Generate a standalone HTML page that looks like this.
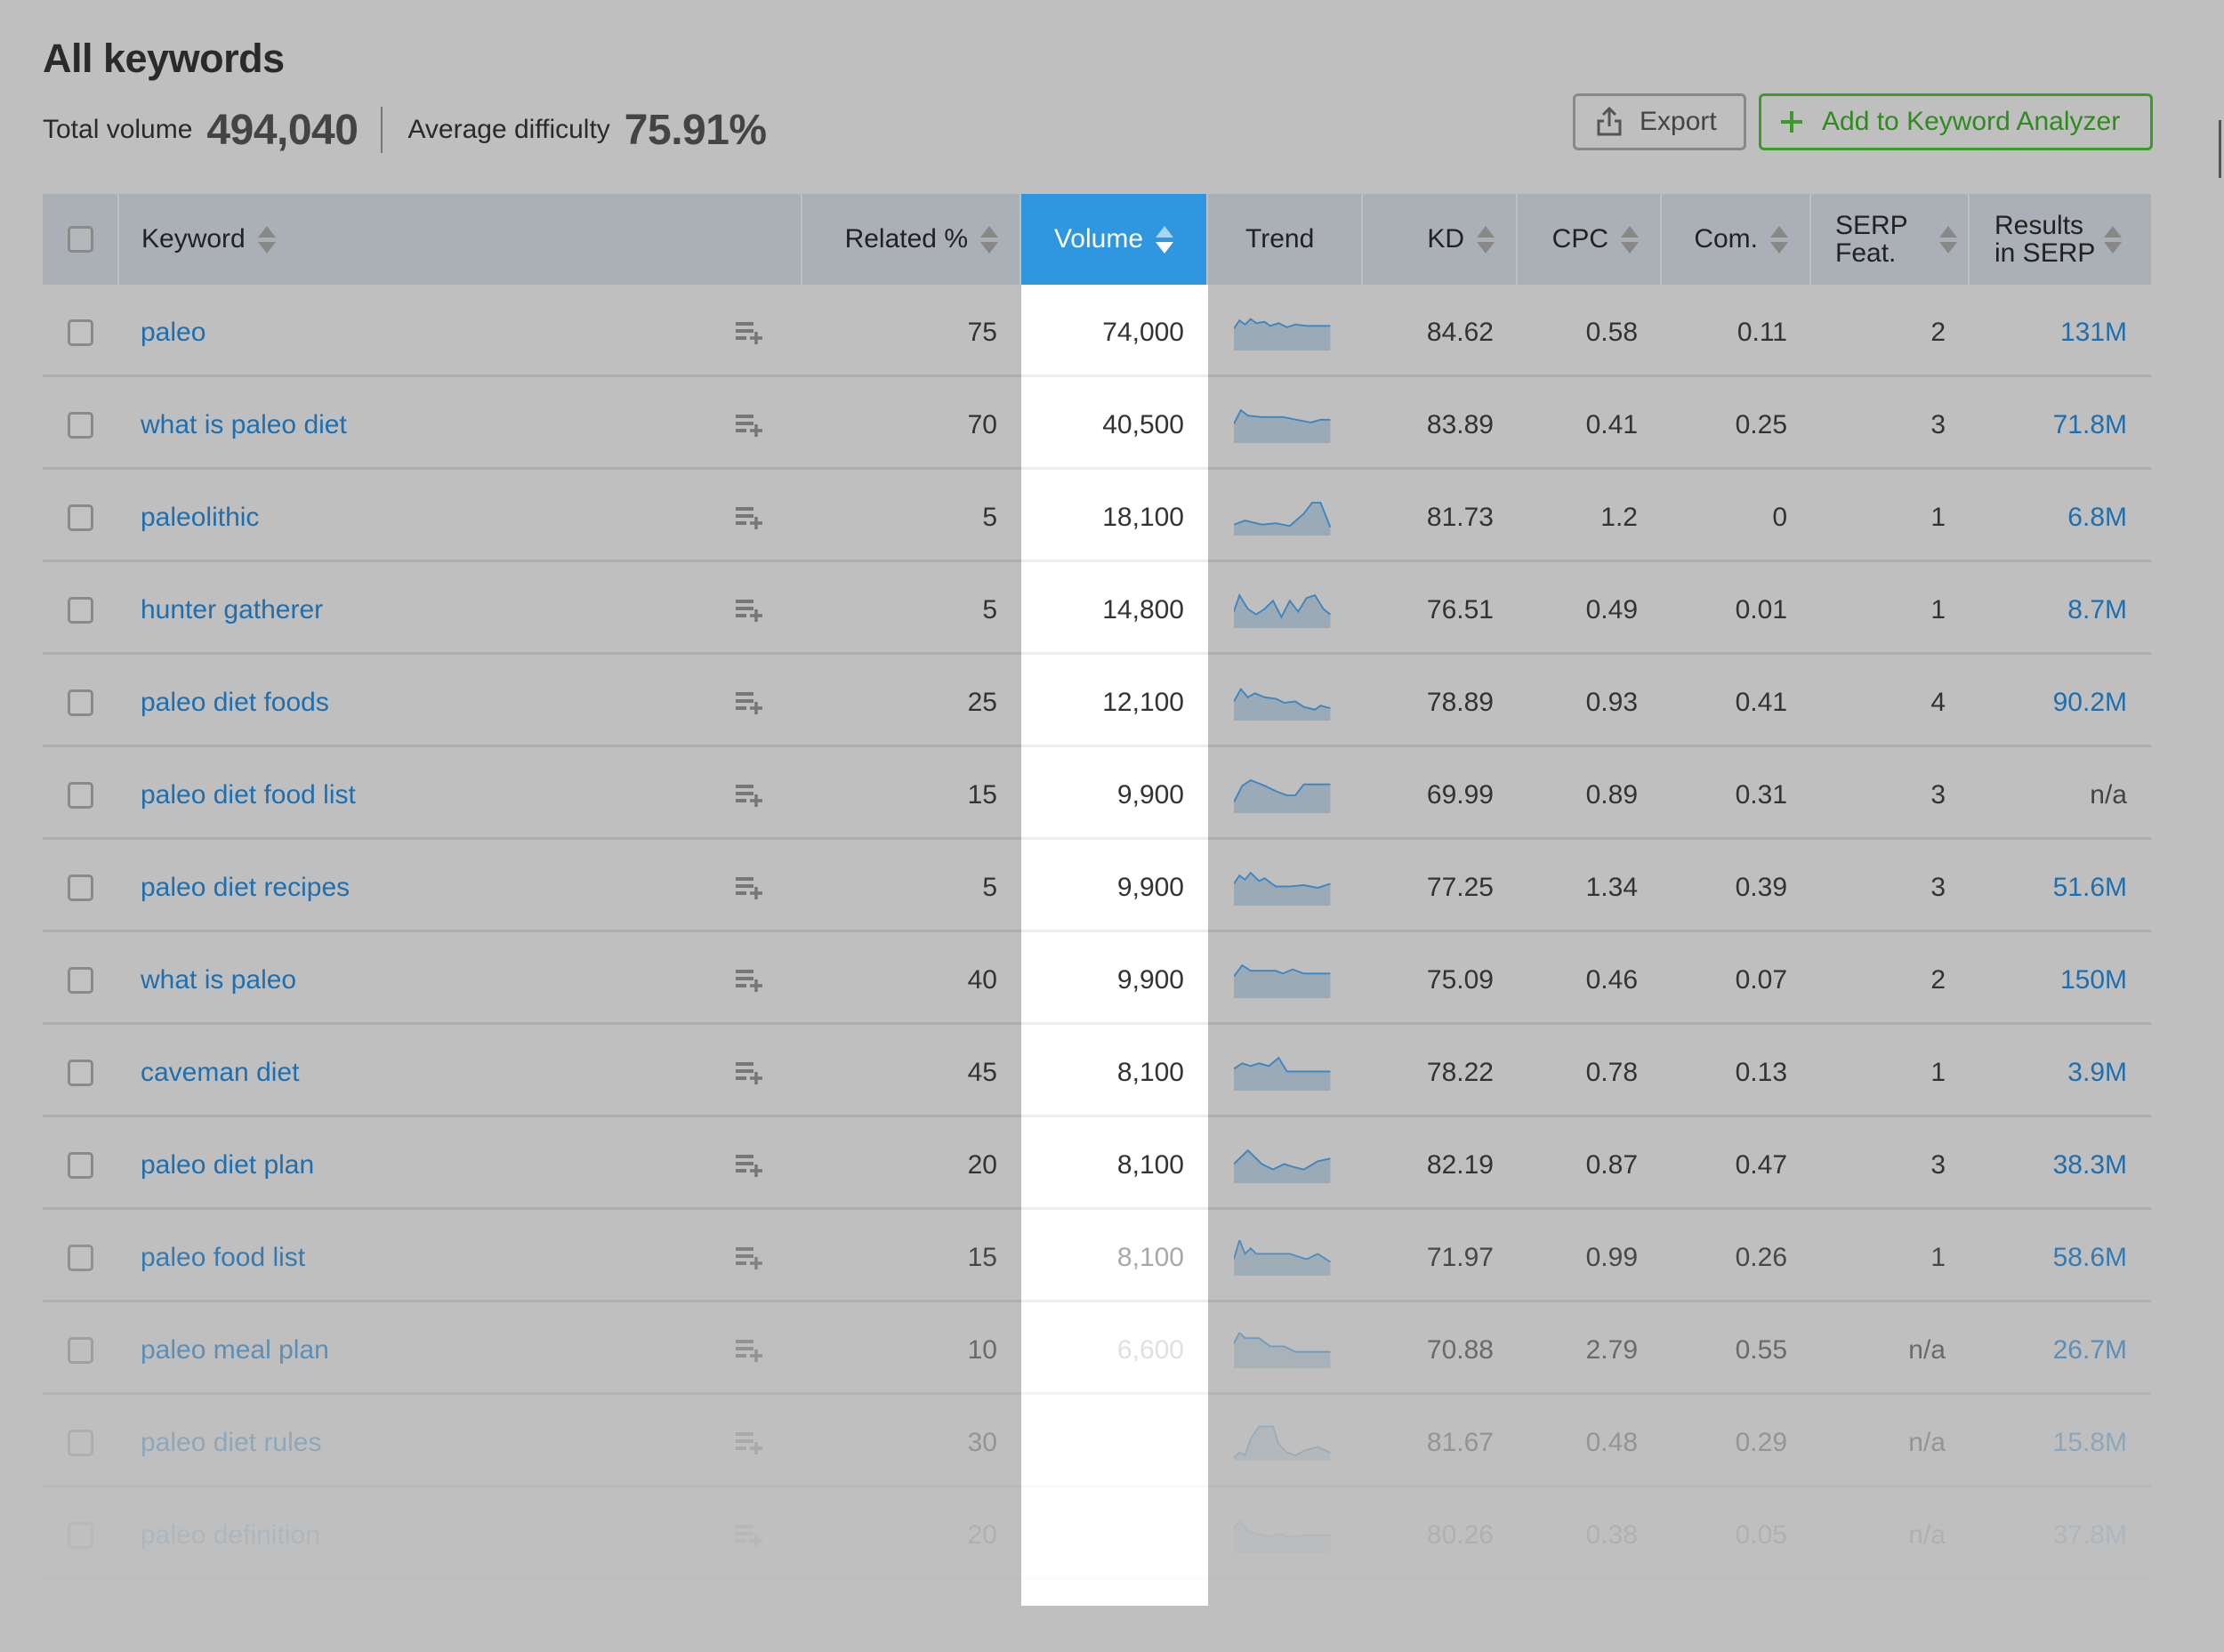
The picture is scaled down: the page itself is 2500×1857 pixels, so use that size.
<!DOCTYPE html>
<html><head><meta charset="utf-8"><style>
*{box-sizing:border-box;margin:0;padding:0}
body{width:2500px;height:1857px;background:#bfbfbf;font-family:"Liberation Sans",sans-serif;position:relative;overflow:hidden;color:#333}
.title{position:absolute;left:48px;top:40px;font-size:45px;font-weight:bold;color:#2a2a2a;letter-spacing:-0.5px}
.stats{position:absolute;left:48px;top:116px;height:60px;display:flex;align-items:center;font-size:30px;color:#2a2a2a;white-space:nowrap}
.stats b{font-size:48px;color:#444;margin:0 26px 0 16px;letter-spacing:-0.5px}
.sep{width:2px;height:52px;background:#777;margin-right:28px}
.btn{position:absolute;top:105px;height:64px;border-radius:6px;display:flex;align-items:center;font-size:30px}
.exp{left:1768px;width:195px;border:3px solid #888;color:#444;padding-left:22px}
.add{left:1977px;width:443px;border:3px solid #3a9a2a;color:#2f8a1f;padding-left:20px}
.vbar{position:absolute;left:1148px;top:218px;width:210px;height:1587px;background:#fff}
.hdr{position:absolute;left:48px;top:218px;width:2370px;height:102px;display:flex;background:#aab0b5}
.hdr>div{height:102px;display:flex;align-items:center;font-size:30px;color:#222;border-right:2px solid #bcc0c3;line-height:1.05}
.hdr>div:last-child{border-right:none}
.hdr .vol{background:#2f96e0;color:#fff;justify-content:center}
.r{justify-content:flex-end;padding-right:24px}
.ar{display:inline-flex;flex-direction:column;margin-left:14px;gap:5px}
.ar i{display:block;width:0;height:0;border-left:10px solid transparent;border-right:10px solid transparent}
.ar i:first-child{border-bottom:13px solid #888}
.ar i:last-child{border-top:13px solid #888}
.vol .ar i:first-child{border-bottom-color:#a9d4f3}
.vol .ar i:last-child{border-top-color:#fff}
.c0{width:86px}.c1{width:768px}.c2{width:246px}.c3{width:210px}.c4{width:174px}.c5{width:174px}.c6{width:162px}.c7{width:168px}.c8{width:178px}.c9{width:204px}
.cb{width:29px;height:30px;border:3px solid #8a8a8a;border-radius:5px;margin-left:28px;background:#c2c2c2}
.row{position:absolute;left:48px;width:2370px;height:104px;display:flex;font-size:30px}
.row>div{height:104px;display:flex;align-items:center;border-bottom:3px solid #adadad;padding-top:6px}
.row>.c3{border-bottom-color:#ececec}
.row .n{justify-content:flex-end;padding-right:27px}
.row .c1{position:relative;padding-left:24px;color:#1f6fae}
.row .c1 svg{position:absolute;left:693px;top:40px}
.row .c9{color:#1f6fae}
.row .c4{padding-left:29px}
</style></head><body>
<div class="title">All keywords</div>
<div class="stats">Total volume<b>494,040</b><div class="sep"></div>Average difficulty<b>75.91%</b></div>
<div class="btn exp"><svg width="32" height="34" viewBox="0 0 32 34" style="margin-right:18px"><path d="M16 2v20M9 9l7-7 7 7" stroke="#555" stroke-width="3" fill="none"/><path d="M10 16H4v15h24V16h-6" stroke="#555" stroke-width="3" fill="none"/></svg>Export</div>
<div class="btn add"><svg width="28" height="28" viewBox="0 0 28 28" style="margin-right:20px"><path d="M14 2v24M2 14h24" stroke="#3a9a2a" stroke-width="4"/></svg>Add to Keyword Analyzer</div>
<div style="position:absolute;left:2494px;top:135px;width:3px;height:65px;background:#555"></div>
<div class="vbar"></div>
<div class="hdr">
<div class="c0"><div class="cb" style="background:#b4b8bb"></div></div>
<div class="c1" style="padding-left:25px">Keyword<span class="ar"><i></i><i></i></span></div>
<div class="c2 r">Related %<span class="ar"><i></i><i></i></span></div>
<div class="c3 vol">Volume<span class="ar"><i></i><i></i></span></div>
<div class="c4" style="padding-left:42px">Trend</div>
<div class="c5 r">KD<span class="ar"><i></i><i></i></span></div>
<div class="c6 r">CPC<span class="ar"><i></i><i></i></span></div>
<div class="c7 r">Com.<span class="ar"><i></i><i></i></span></div>
<div class="c8" style="padding-left:27px"><span style="width:117px">SERP<br>Feat.</span><span class="ar" style="margin-left:0"><i></i><i></i></span></div>
<div class="c9" style="padding-left:28px"><span style="width:123px">Results<br>in SERP</span><span class="ar" style="margin-left:0"><i></i><i></i></span></div>
</div>

<svg width="0" height="0" style="position:absolute"><defs><g id="li"><rect x="0" y="2" width="20" height="4" fill="#777"/><rect x="0" y="10" width="20" height="4" fill="#777"/><rect x="0" y="18" width="12" height="4" fill="#777"/><path d="M23 13v14M16 20h14" stroke="#777" stroke-width="3.5"/></g></defs></svg>

<div class="row" style="top:320px"><div class="c0"><div class="cb"></div></div><div class="c1">paleo<svg width="32" height="30"><use href="#li"/></svg></div><div class="c2 n">75</div><div class="c3 n">74,000</div><div class="c4"><svg width="110" height="40" viewBox="0 0 70 26" preserveAspectRatio="none"><polygon points="0,10 4,4 8,7 12,3 16,6 22,5 26,8 32,6 38,9 44,7 52,8 69,8 69,26 0,26" fill="#9aaab6"/><polyline points="0,10 4,4 8,7 12,3 16,6 22,5 26,8 32,6 38,9 44,7 52,8 69,8" fill="none" stroke="#3d85c0" stroke-width="1.2"/></svg></div><div class="c5 n">84.62</div><div class="c6 n">0.58</div><div class="c7 n">0.11</div><div class="c8 n">2</div><div class="c9 n">131M</div></div>

<div class="row" style="top:424px"><div class="c0"><div class="cb"></div></div><div class="c1">what is paleo diet<svg width="32" height="30"><use href="#li"/></svg></div><div class="c2 n">70</div><div class="c3 n">40,500</div><div class="c4"><svg width="110" height="40" viewBox="0 0 70 26" preserveAspectRatio="none"><polygon points="0,12 5,2 10,6 20,7 35,7 45,9 55,11 62,9 69,9 69,26 0,26" fill="#9aaab6"/><polyline points="0,12 5,2 10,6 20,7 35,7 45,9 55,11 62,9 69,9" fill="none" stroke="#3d85c0" stroke-width="1.2"/></svg></div><div class="c5 n">83.89</div><div class="c6 n">0.41</div><div class="c7 n">0.25</div><div class="c8 n">3</div><div class="c9 n">71.8M</div></div>

<div class="row" style="top:528px"><div class="c0"><div class="cb"></div></div><div class="c1">paleolithic<svg width="32" height="30"><use href="#li"/></svg></div><div class="c2 n">5</div><div class="c3 n">18,100</div><div class="c4"><svg width="110" height="40" viewBox="0 0 70 26" preserveAspectRatio="none"><polygon points="0,18 8,15 20,18 30,17 40,19 50,10 56,2 62,2 69,20 69,26 0,26" fill="#9aaab6"/><polyline points="0,18 8,15 20,18 30,17 40,19 50,10 56,2 62,2 69,20" fill="none" stroke="#3d85c0" stroke-width="1.2"/></svg></div><div class="c5 n">81.73</div><div class="c6 n">1.2</div><div class="c7 n">0</div><div class="c8 n">1</div><div class="c9 n">6.8M</div></div>

<div class="row" style="top:632px"><div class="c0"><div class="cb"></div></div><div class="c1">hunter gatherer<svg width="32" height="30"><use href="#li"/></svg></div><div class="c2 n">5</div><div class="c3 n">14,800</div><div class="c4"><svg width="110" height="40" viewBox="0 0 70 26" preserveAspectRatio="none"><polygon points="0,14 4,2 10,12 16,16 22,12 28,6 34,18 40,6 46,14 52,4 58,2 64,12 69,16 69,26 0,26" fill="#9aaab6"/><polyline points="0,14 4,2 10,12 16,16 22,12 28,6 34,18 40,6 46,14 52,4 58,2 64,12 69,16" fill="none" stroke="#3d85c0" stroke-width="1.2"/></svg></div><div class="c5 n">76.51</div><div class="c6 n">0.49</div><div class="c7 n">0.01</div><div class="c8 n">1</div><div class="c9 n">8.7M</div></div>

<div class="row" style="top:736px"><div class="c0"><div class="cb"></div></div><div class="c1">paleo diet foods<svg width="32" height="30"><use href="#li"/></svg></div><div class="c2 n">25</div><div class="c3 n">12,100</div><div class="c4"><svg width="110" height="40" viewBox="0 0 70 26" preserveAspectRatio="none"><polygon points="0,12 5,3 10,9 15,6 22,9 30,10 36,13 44,12 50,16 58,18 62,15 69,17 69,26 0,26" fill="#9aaab6"/><polyline points="0,12 5,3 10,9 15,6 22,9 30,10 36,13 44,12 50,16 58,18 62,15 69,17" fill="none" stroke="#3d85c0" stroke-width="1.2"/></svg></div><div class="c5 n">78.89</div><div class="c6 n">0.93</div><div class="c7 n">0.41</div><div class="c8 n">4</div><div class="c9 n">90.2M</div></div>

<div class="row" style="top:840px"><div class="c0"><div class="cb"></div></div><div class="c1">paleo diet food list<svg width="32" height="30"><use href="#li"/></svg></div><div class="c2 n">15</div><div class="c3 n">9,900</div><div class="c4"><svg width="110" height="40" viewBox="0 0 70 26" preserveAspectRatio="none"><polygon points="0,18 6,6 12,2 22,6 30,10 38,13 44,13 50,5 69,5 69,26 0,26" fill="#9aaab6"/><polyline points="0,18 6,6 12,2 22,6 30,10 38,13 44,13 50,5 69,5" fill="none" stroke="#3d85c0" stroke-width="1.2"/></svg></div><div class="c5 n">69.99</div><div class="c6 n">0.89</div><div class="c7 n">0.31</div><div class="c8 n">3</div><div class="c9 n" style="color:#444">n/a</div></div>

<div class="row" style="top:944px"><div class="c0"><div class="cb"></div></div><div class="c1">paleo diet recipes<svg width="32" height="30"><use href="#li"/></svg></div><div class="c2 n">5</div><div class="c3 n">9,900</div><div class="c4"><svg width="110" height="40" viewBox="0 0 70 26" preserveAspectRatio="none"><polygon points="0,10 4,4 8,7 12,2 18,8 22,6 30,12 40,12 50,11 60,13 69,10 69,26 0,26" fill="#9aaab6"/><polyline points="0,10 4,4 8,7 12,2 18,8 22,6 30,12 40,12 50,11 60,13 69,10" fill="none" stroke="#3d85c0" stroke-width="1.2"/></svg></div><div class="c5 n">77.25</div><div class="c6 n">1.34</div><div class="c7 n">0.39</div><div class="c8 n">3</div><div class="c9 n">51.6M</div></div>

<div class="row" style="top:1048px"><div class="c0"><div class="cb"></div></div><div class="c1">what is paleo<svg width="32" height="30"><use href="#li"/></svg></div><div class="c2 n">40</div><div class="c3 n">9,900</div><div class="c4"><svg width="110" height="40" viewBox="0 0 70 26" preserveAspectRatio="none"><polygon points="0,10 6,2 12,6 30,6 35,8 42,5 50,8 69,8 69,26 0,26" fill="#9aaab6"/><polyline points="0,10 6,2 12,6 30,6 35,8 42,5 50,8 69,8" fill="none" stroke="#3d85c0" stroke-width="1.2"/></svg></div><div class="c5 n">75.09</div><div class="c6 n">0.46</div><div class="c7 n">0.07</div><div class="c8 n">2</div><div class="c9 n">150M</div></div>

<div class="row" style="top:1152px"><div class="c0"><div class="cb"></div></div><div class="c1">caveman diet<svg width="32" height="30"><use href="#li"/></svg></div><div class="c2 n">45</div><div class="c3 n">8,100</div><div class="c4"><svg width="110" height="40" viewBox="0 0 70 26" preserveAspectRatio="none"><polygon points="0,10 6,6 12,8 18,6 25,8 32,2 38,12 69,12 69,26 0,26" fill="#9aaab6"/><polyline points="0,10 6,6 12,8 18,6 25,8 32,2 38,12 69,12" fill="none" stroke="#3d85c0" stroke-width="1.2"/></svg></div><div class="c5 n">78.22</div><div class="c6 n">0.78</div><div class="c7 n">0.13</div><div class="c8 n">1</div><div class="c9 n">3.9M</div></div>

<div class="row" style="top:1256px"><div class="c0"><div class="cb"></div></div><div class="c1">paleo diet plan<svg width="32" height="30"><use href="#li"/></svg></div><div class="c2 n">20</div><div class="c3 n">8,100</div><div class="c4"><svg width="110" height="40" viewBox="0 0 70 26" preserveAspectRatio="none"><polygon points="0,12 10,2 20,12 28,16 36,12 42,14 50,16 60,10 69,8 69,26 0,26" fill="#9aaab6"/><polyline points="0,12 10,2 20,12 28,16 36,12 42,14 50,16 60,10 69,8" fill="none" stroke="#3d85c0" stroke-width="1.2"/></svg></div><div class="c5 n">82.19</div><div class="c6 n">0.87</div><div class="c7 n">0.47</div><div class="c8 n">3</div><div class="c9 n">38.3M</div></div>

<div class="row" style="top:1360px;opacity:.85"><div class="c0"><div class="cb"></div></div><div class="c1">paleo food list<svg width="32" height="30"><use href="#li"/></svg></div><div class="c2 n">15</div><div class="c3 n" style="color:#999">8,100</div><div class="c4"><svg width="110" height="40" viewBox="0 0 70 26" preserveAspectRatio="none"><polygon points="0,14 4,0 8,10 12,6 16,10 30,10 40,10 46,12 52,14 60,10 69,16 69,26 0,26" fill="#9aaab6"/><polyline points="0,14 4,0 8,10 12,6 16,10 30,10 40,10 46,12 52,14 60,10 69,16" fill="none" stroke="#3d85c0" stroke-width="1.2"/></svg></div><div class="c5 n">71.97</div><div class="c6 n">0.99</div><div class="c7 n">0.26</div><div class="c8 n">1</div><div class="c9 n">58.6M</div></div>

<div class="row" style="top:1464px;opacity:.6"><div class="c0"><div class="cb"></div></div><div class="c1">paleo meal plan<svg width="32" height="30"><use href="#li"/></svg></div><div class="c2 n">10</div><div class="c3 n" style="color:#ccc">6,600</div><div class="c4"><svg width="110" height="40" viewBox="0 0 70 26" preserveAspectRatio="none"><polygon points="0,8 4,0 8,4 18,4 26,10 36,10 44,14 69,14 69,26 0,26" fill="#9aaab6"/><polyline points="0,8 4,0 8,4 18,4 26,10 36,10 44,14 69,14" fill="none" stroke="#3d85c0" stroke-width="1.2"/></svg></div><div class="c5 n">70.88</div><div class="c6 n">2.79</div><div class="c7 n">0.55</div><div class="c8 n">n/a</div><div class="c9 n">26.7M</div></div>

<div class="row" style="top:1568px;opacity:.3"><div class="c0"><div class="cb"></div></div><div class="c1">paleo diet rules<svg width="32" height="30"><use href="#li"/></svg></div><div class="c2 n">30</div><div class="c3 n"></div><div class="c4"><svg width="110" height="40" viewBox="0 0 70 26" preserveAspectRatio="none"><polygon points="0,24 4,20 8,22 12,10 18,1 28,1 32,14 38,20 44,22 52,18 60,16 69,20 69,26 0,26" fill="#9aaab6"/><polyline points="0,24 4,20 8,22 12,10 18,1 28,1 32,14 38,20 44,22 52,18 60,16 69,20" fill="none" stroke="#3d85c0" stroke-width="1.2"/></svg></div><div class="c5 n">81.67</div><div class="c6 n">0.48</div><div class="c7 n">0.29</div><div class="c8 n">n/a</div><div class="c9 n">15.8M</div></div>

<div class="row" style="top:1672px;opacity:.1"><div class="c0"><div class="cb"></div></div><div class="c1">paleo definition<svg width="32" height="30"><use href="#li"/></svg></div><div class="c2 n">20</div><div class="c3 n"></div><div class="c4"><svg width="110" height="40" viewBox="0 0 70 26" preserveAspectRatio="none"><polygon points="0,8 4,2 10,10 18,12 26,14 32,12 40,14 52,13 69,13 69,26 0,26" fill="#9aaab6"/><polyline points="0,8 4,2 10,10 18,12 26,14 32,12 40,14 52,13 69,13" fill="none" stroke="#3d85c0" stroke-width="1.2"/></svg></div><div class="c5 n">80.26</div><div class="c6 n">0.38</div><div class="c7 n">0.05</div><div class="c8 n">n/a</div><div class="c9 n">37.8M</div></div>
</body></html>
